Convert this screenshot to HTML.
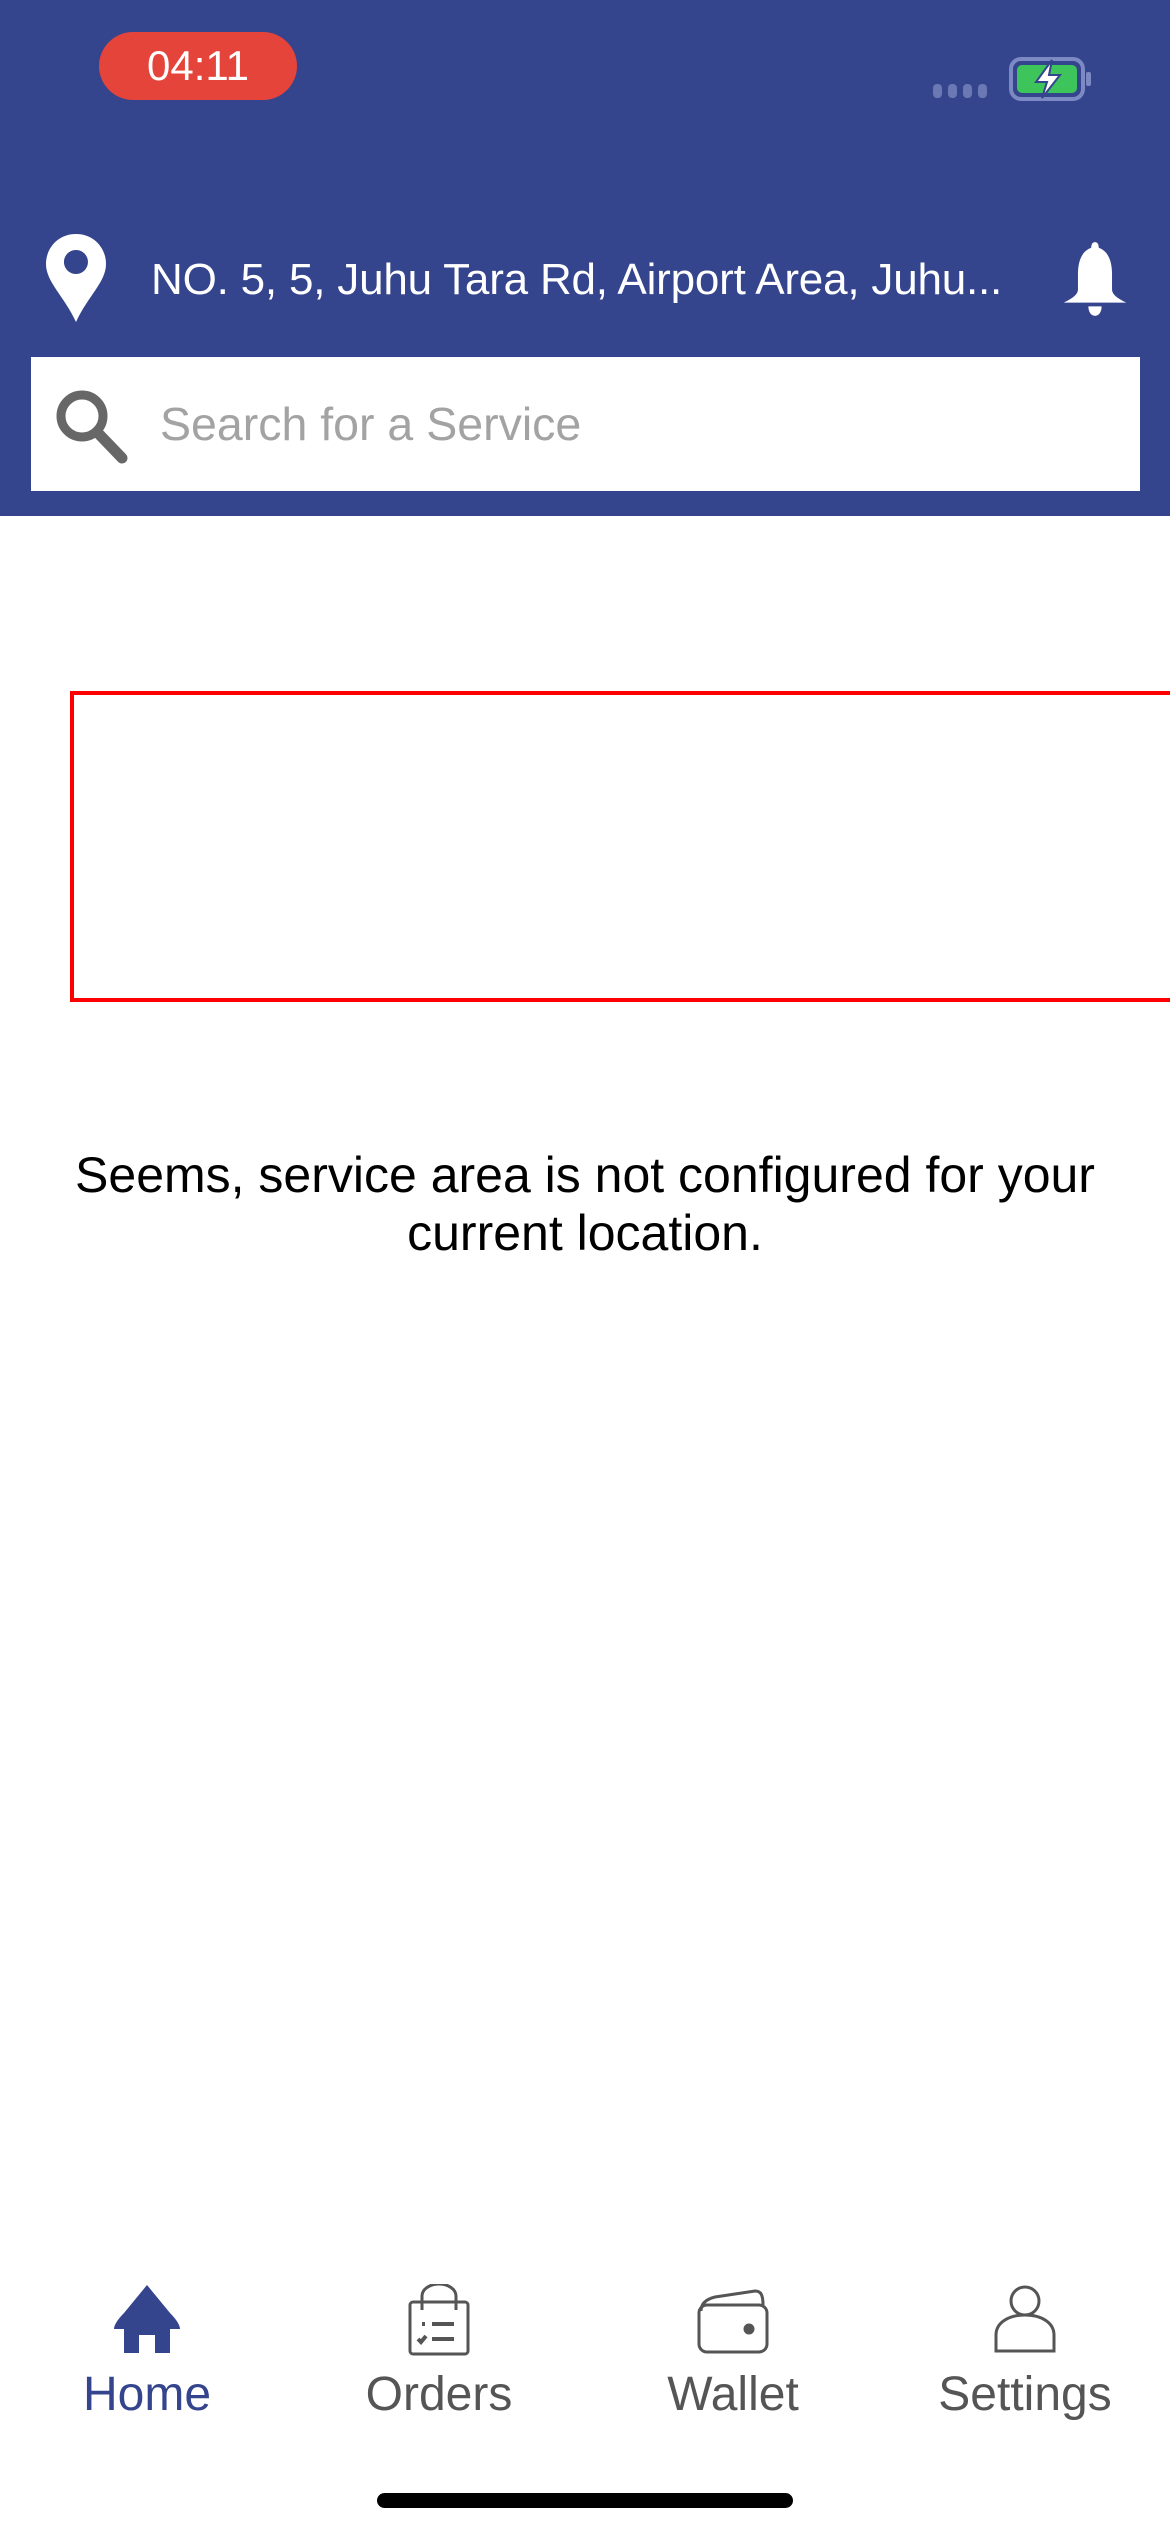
<!DOCTYPE html>
<html><head><meta charset="utf-8"><style>
*{margin:0;padding:0;box-sizing:border-box}
body{width:1170px;height:2532px;background:#fff;position:relative;overflow:hidden;font-family:"Liberation Sans",sans-serif}
.hdr{position:absolute;left:0;top:0;width:1170px;height:516px;background:#34448D}
.abs{position:absolute}
.pill{left:99px;top:32px;width:198px;height:68px;border-radius:34px;background:#E5443A;color:#fff;font-size:42px;text-align:center;line-height:68px}
.addr{left:151px;top:248px;color:#fff;font-size:44px;line-height:64px;white-space:nowrap;letter-spacing:-0.2px}
.search{left:31px;top:357px;width:1109px;height:134px;background:#fff}
.ph{left:160px;top:396px;font-size:46.5px;color:#a3a3a3;line-height:56px}
.red{left:70px;top:691px;width:1120px;height:311px;border:4px solid #f00}
.msg{left:0;top:1146px;width:1170px;text-align:center;font-size:50px;line-height:58px;color:#000}
.lab{top:2370px;width:300px;text-align:center;font-size:48px;line-height:50px;color:#555}
.ind{left:377px;top:2493px;width:416px;height:15px;border-radius:8px;background:#000}
</style></head><body>
<div class="hdr"></div>
<div class="abs pill">04:11</div>
<svg class="abs" style="left:930px;top:80px" width="70" height="22"><g fill="#6a78b4"><rect x="3" y="4" width="9" height="14" rx="4"/><rect x="18" y="4" width="9" height="14" rx="4"/><rect x="33" y="4" width="9" height="14" rx="4"/><rect x="48" y="4" width="9" height="14" rx="4"/></g></svg>
<svg class="abs" style="left:1008px;top:56px" width="86" height="46" viewBox="0 0 86 46"><rect x="3" y="3" width="72" height="40" rx="10" fill="none" stroke="#7c89c2" stroke-width="4"/><rect x="9" y="9" width="60" height="28" rx="5" fill="#3dc45a"/><rect x="78" y="16" width="5" height="14" rx="2" fill="#7c89c2"/><path d="M44 4 L28 26 L39 26 L34 42 L52 19 L41 19 Z" fill="#fff" stroke="#34448D" stroke-width="2"/></svg>
<svg class="abs" style="left:44px;top:232px" width="64" height="92" viewBox="0 0 64 92"><path d="M32 2 C14 2 2 16 2 32 C2 50 20 64 32 90 C44 64 62 50 62 32 C62 16 50 2 32 2 Z M32 18 A12 12 0 1 1 31.9 18 Z" fill="#fff" fill-rule="evenodd"/></svg>
<div class="abs addr">NO. 5, 5, Juhu Tara Rd, Airport Area, Juhu...</div>
<svg class="abs" style="left:1060px;top:238px" width="70" height="82" viewBox="0 0 74 82"><path d="M37 2 C34 2 33 5 33 8 C22 12 19 24 19 36 L19 52 C19 58 12 62 4 66 L70 66 C62 62 55 58 55 52 L55 36 C55 24 52 12 41 8 C41 5 40 2 37 2 Z" fill="#fff"/><path d="M30 70 L44 70 C44 76 41 80 37 80 C33 80 30 76 30 70 Z" fill="#fff"/></svg>
<div class="abs search"></div>
<svg class="abs" style="left:52px;top:386px" width="80" height="80" viewBox="0 0 80 80"><circle cx="30" cy="30" r="21" fill="none" stroke="#676767" stroke-width="9"/><path d="M45 46 L70 72" stroke="#676767" stroke-width="11" stroke-linecap="round"/></svg>
<div class="abs ph">Search for a Service</div>
<div class="abs red"></div>
<div class="abs msg">Seems, service area is not configured for your<br>current location.</div>
<svg class="abs" style="left:112px;top:2285px" width="70" height="68" viewBox="0 0 70 68"><path d="M35 0 L58 28 C64 34 68 40 68 44 L58 44 L58 68 L43 68 L43 50 L27 50 L27 68 L12 68 L12 44 L2 44 C2 40 6 34 12 28 Z" fill="#34448D"/></svg>
<svg class="abs" style="left:408px;top:2284px" width="62" height="72" viewBox="0 0 62 72" fill="none" stroke="#555" stroke-width="3"><rect x="2" y="18" width="58" height="52" rx="3"/><path d="M14 26 L14 12 A17 12 0 0 1 48 12 L48 26"/><path d="M14 40 h3 M24 40 h22 M24 55 h22 M10 55 l3 3 l5 -6" stroke-width="4"/></svg>
<svg class="abs" style="left:697px;top:2289px" width="72" height="66" viewBox="0 0 72 66" fill="none" stroke="#555" stroke-width="3"><rect x="2" y="16" width="68" height="47" rx="8"/><path d="M4 22 C4 14 10 10 18 8 L58 2 C64 2 66 6 66 16"/><circle cx="52" cy="40" r="4" fill="#555"/></svg>
<svg class="abs" style="left:994px;top:2285px" width="62" height="70" viewBox="0 0 62 70" fill="none" stroke="#555" stroke-width="3"><circle cx="31" cy="16" r="14"/><path d="M2 66 L2 50 C2 38 14 30 31 30 C48 30 60 38 60 50 L60 66 Z"/></svg>
<div class="abs lab" style="left:-3px;color:#34448D">Home</div>
<div class="abs lab" style="left:289px">Orders</div>
<div class="abs lab" style="left:583px">Wallet</div>
<div class="abs lab" style="left:875px">Settings</div>
<div class="abs ind"></div>
</body></html>
